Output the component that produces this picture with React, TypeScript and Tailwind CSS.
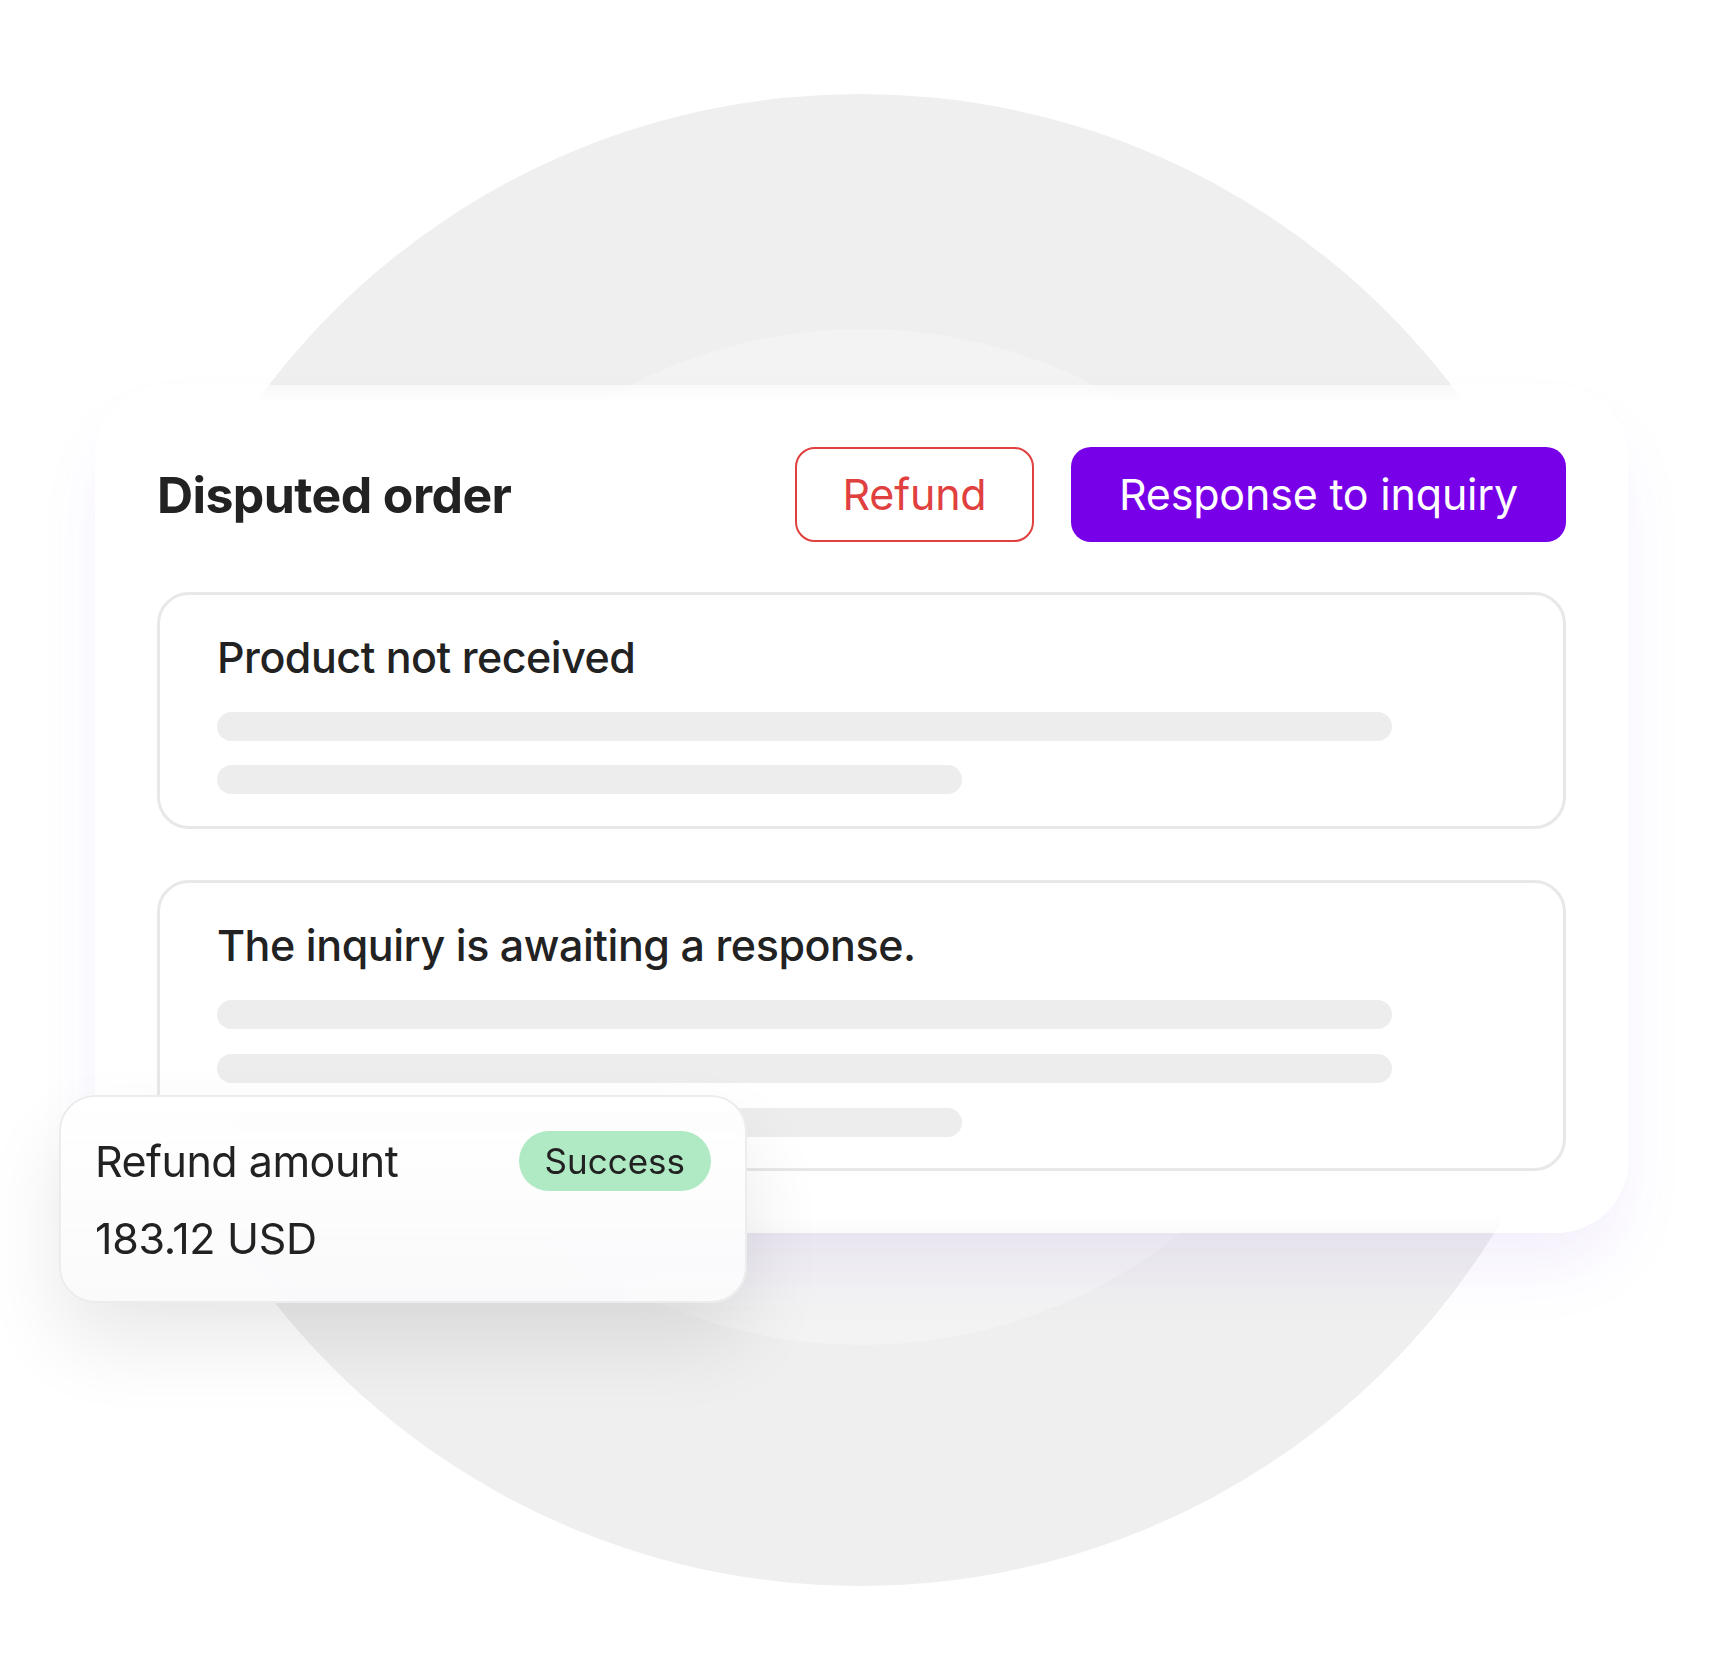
const font = "font-['Inter','Noto_Sans',sans-serif]"

function Bar({ width }: { width: string }) {
  return <div className={`h-[29px] rounded-full bg-[#ededed] ${width}`} />
}

export default function App() {
  return (
    <div className={`relative w-[1717px] h-[1680px] overflow-hidden bg-white text-[#222] ${font}`}>
      {/* backdrop circles */}
      <div className="absolute left-[114px] top-[94px] h-[1492px] w-[1492px] rounded-full bg-[#efefef]" />
      <div className="absolute left-[354px] top-[329px] h-[1016px] w-[1016px] rounded-full bg-[#f3f3f3]" />

      {/* main card */}
      <div className="relative pl-[95px] pt-[385px]">
        <div className="w-[1533px] rounded-[72px] bg-[linear-gradient(to_bottom,rgba(255,255,255,0.55),#fff_17px,#fff_calc(100%-17px),rgba(255,255,255,0.7))] px-[62px] pb-[62px] pt-[62px] shadow-[0_40px_70px_-10px_rgba(120,70,220,0.09)]">
          <div className="flex items-center justify-between">
            <h1 className="text-[50px] font-bold leading-[60px] tracking-[-0.6px]">Disputed order</h1>
            <div className="flex gap-[37px]">
              <button className="flex h-[95px] w-[239px] items-center justify-center rounded-[20px] border-[2.5px] border-[#e0403e] text-[43px] tracking-[-0.2px] text-[#e0403e]">
                Refund
              </button>
              <button className="flex h-[95px] w-[495px] items-center justify-center rounded-[20px] bg-[#7800e8] text-[43px] tracking-[-0.2px] text-white">
                Response to inquiry
              </button>
            </div>
          </div>

          <div className="mt-[50px] rounded-[32px] border-[3px] border-[#e8e8e8] pb-[32px] pl-[57px] pt-[36px]">
            <p className="text-[43px] font-medium leading-[52px] tracking-[-0.5px]">Product not received</p>
            <div className="mt-[29px] flex flex-col gap-[24px]">
              <Bar width="w-[1175px]" />
              <Bar width="w-[745px]" />
            </div>
          </div>

          <div className="mt-[51px] rounded-[32px] border-[3px] border-[#e8e8e8] pb-[31px] pl-[57px] pt-[36px]">
            <p className="text-[43px] font-medium leading-[52px] tracking-[-0.45px]">The inquiry is awaiting a response.</p>
            <div className="mt-[29px] flex flex-col gap-[25px]">
              <Bar width="w-[1175px]" />
              <Bar width="w-[1175px]" />
              <Bar width="w-[745px]" />
            </div>
          </div>
        </div>
      </div>

      {/* floating refund card */}
      <div className="absolute left-[59px] top-[1095px] w-[688px] rounded-[36px] border-2 border-[#ececec] bg-[linear-gradient(to_bottom,rgba(255,255,255,0.92),rgba(250,250,251,0.95))] px-[34px] pb-[37px] pt-[34px] shadow-[0_40px_80px_rgba(0,0,0,0.09)] backdrop-blur-md">
        <div className="flex items-center justify-between">
          <span className="text-[43px] leading-[52px] tracking-[-0.5px]">Refund amount</span>
          <span className="flex h-[60px] items-center rounded-full bg-[#b0eac4] px-[26px] text-[35px]">Success</span>
        </div>
        <p className="mt-[21px] text-[43px] leading-[52px] tracking-[-0.3px]">183.12 USD</p>
      </div>
    </div>
  )
}
